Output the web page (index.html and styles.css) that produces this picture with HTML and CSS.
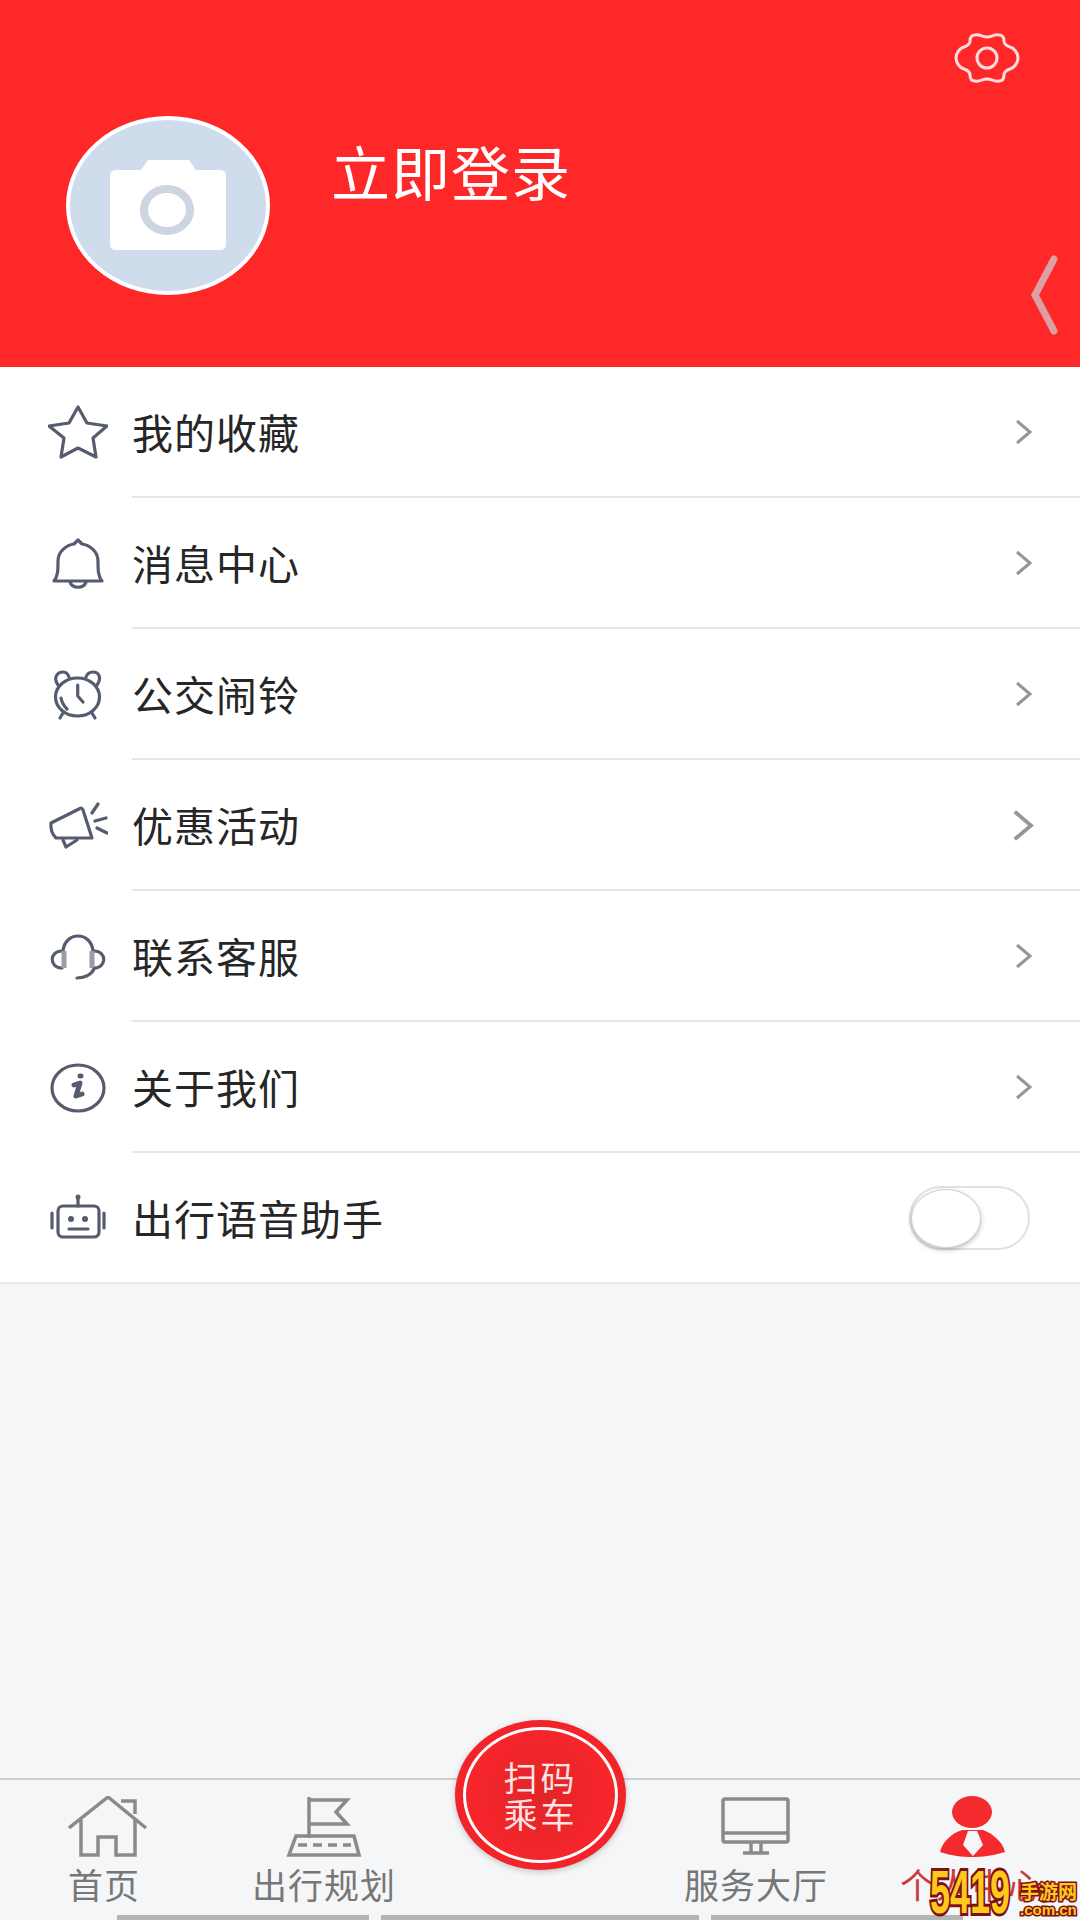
FILE: index.html
```html
<!DOCTYPE html>
<html lang="zh-CN">
<head>
    <meta charset="UTF-8">
    <meta name="viewport" content="width=device-width, initial-scale=1.0">
    <title>个人中心</title>
    <link rel="stylesheet" href="styles.css">
</head>
<body>
    <header class="profile">
        <div class="avatar">
            <svg class="camera" viewBox="0 0 116 90">
                <path d="M0 16 Q0 10 6 10 H31 L38 0 H79 L86 10 H110 Q116 10 116 16 V84 Q116 90 110 90 H6 Q0 90 0 84 Z" fill="#fff"/>
                <ellipse cx="57" cy="50" rx="23" ry="21" fill="#fff" stroke="#cdd5e2" stroke-width="8"/>
            </svg>
        </div>
        <span class="login-text">立即登录</span>
        <svg class="gear" viewBox="0 0 62 50">
            <path d="M31 4 C36 4 38 1 43 2 C47 2 48 5 48 8 C48 11 51 13 54 14 C58 15 62 20 62 25 C62 30 58 35 54 36 C51 37 48 39 48 42 C48 45 47 48 43 48 C38 49 36 46 31 46 C26 46 24 49 19 48 C15 48 14 45 14 42 C14 39 11 37 8 36 C4 35 0 30 0 25 C0 20 4 15 8 14 C11 13 14 11 14 8 C14 5 15 2 19 2 C24 1 26 4 31 4 Z" fill="none" stroke="#ffdcdc" stroke-width="3"/>
            <circle cx="31" cy="25" r="10" fill="none" stroke="#ffdcdc" stroke-width="3"/>
        </svg>
        <svg class="side-arrow" viewBox="0 0 28 80">
            <path d="M24 4 L5 40 L24 76" fill="none" stroke="#dca0a4" stroke-width="7" stroke-linecap="round"/>
        </svg>
    </header>

    <ul class="menu">
        <li class="menu-row">
            <svg class="menu-icon" viewBox="0 0 60 60">
                <path d="M30 4 L39 20 L59 23 L45 35 L48 54 L30 45 L13 54 L16 35 L1 23 L21 20 Z"/>
            </svg>
            <div class="menu-body">
                <span class="menu-text">我的收藏</span>
                <svg class="menu-arrow" viewBox="0 0 20 28"><path d="M3 3 L16 14 L3 25"/></svg>
            </div>
        </li>
        <li class="menu-row">
            <svg class="menu-icon" viewBox="0 0 60 60">
                <path d="M6 47 C10 42 10 36 10 27 C10 17 19 11 26 10 L30 6 L34 10 C41 11 50 17 50 27 C50 36 50 42 54 47 Z"/>
                <path d="M22 48 C24 55 36 55 38 48"/>
            </svg>
            <div class="menu-body">
                <span class="menu-text">消息中心</span>
                <svg class="menu-arrow" viewBox="0 0 20 28"><path d="M3 3 L16 14 L3 25"/></svg>
            </div>
        </li>
        <li class="menu-row">
            <svg class="menu-icon" viewBox="0 0 60 60">
                <ellipse cx="29.5" cy="32" rx="22" ry="19"/>
                <path d="M10 20 C5 13 9 7 15 7 C18 7 20 9 21 12"/>
                <path d="M38 12 C39 9 42 7 45 7 C51 7 54 13 49 20"/>
                <path d="M29.7 20 V31 L35 37"/>
                <path d="M13 33 C14 38 16 41 19 44"/>
                <path d="M15 48 L12 53 M44 48 L47 53"/>
            </svg>
            <div class="menu-body">
                <span class="menu-text">公交闹铃</span>
                <svg class="menu-arrow" viewBox="0 0 20 28"><path d="M3 3 L16 14 L3 25"/></svg>
            </div>
        </li>
        <li class="menu-row">
            <svg class="menu-icon" viewBox="0 0 60 60">
                <path d="M3 27 L31 13 Q34 11 35 14 L44 42 H8 Q2 36 3 27 Z"/>
                <path d="M15 44 L18 51 L29 44"/>
                <path d="M44 17 L50 8 M47 25 L58 22 M49 32 L59 37"/>
            </svg>
            <div class="menu-body">
                <span class="menu-text">优惠活动</span>
                <svg class="menu-arrow menu-arrow-big" viewBox="0 0 20 28"><path d="M3 3 L16 14 L3 25"/></svg>
            </div>
        </li>
        <li class="menu-row">
            <svg class="menu-icon" viewBox="0 0 60 60">
                <path d="M15 24 C16 14 23 9 30 9 C37 9 44 14 45 24"/>
                <path d="M14 24 C1 24 1 41 14 41"/>
                <path d="M46 24 C59 24 59 41 46 41"/>
                <path class="ear-pad" d="M16 24 V41 M44 24 V41"/>
                <path d="M46 42 C43 48 36 51 29 51"/>
            </svg>
            <div class="menu-body">
                <span class="menu-text">联系客服</span>
                <svg class="menu-arrow" viewBox="0 0 20 28"><path d="M3 3 L16 14 L3 25"/></svg>
            </div>
        </li>
        <li class="menu-row">
            <svg class="menu-icon" viewBox="0 0 60 60">
                <ellipse cx="30" cy="30" rx="26" ry="23"/>
                <path class="icon-thick" d="M26 27 L32 25 L28 38 L34 36"/>
                <path class="icon-thick" d="M32 18 L33 18"/>
            </svg>
            <div class="menu-body">
                <span class="menu-text">关于我们</span>
                <svg class="menu-arrow" viewBox="0 0 20 28"><path d="M3 3 L16 14 L3 25"/></svg>
            </div>
        </li>
        <li class="menu-row menu-row-last">
            <svg class="menu-icon" viewBox="0 0 60 60">
                <rect x="10" y="18" width="41" height="31" rx="5"/>
                <path d="M30 18 V11 M4 25 V40 M56 25 V40 M21 41 H40"/>
                <circle class="icon-dot" cx="30" cy="9" r="2.5"/>
                <circle class="icon-dot" cx="23" cy="31" r="3"/>
                <circle class="icon-dot" cx="37" cy="31" r="3"/>
            </svg>
            <div class="menu-body">
                <span class="menu-text">出行语音助手</span>
                <div class="switch"><div class="switch-knob"></div></div>
            </div>
        </li>
    </ul>

    <div class="spacer"></div>

    <nav class="tabbar">
        <div class="tab">
            <svg class="tab-icon" viewBox="0 0 80 62">
                <path d="M1 32 L40 1 L78 32 M53 5 H67 V18 M13 24 V59 H30 V41 H48 V59 H67 V24"/>
            </svg>
            <span class="tab-label tab-label-home">首页</span>
        </div>
        <div class="tab">
            <svg class="tab-icon" viewBox="0 0 80 62">
                <path d="M25 1 V42 M25 4 H63 L52 16 L63 28 H25 M12 40 H70 L75 59 H5 Z"/>
                <path stroke-dasharray="9 6" d="M14 49 H67"/>
            </svg>
            <span class="tab-label">出行规划</span>
        </div>
        <div class="tab"></div>
        <div class="tab">
            <svg class="tab-icon" viewBox="0 0 80 62">
                <rect x="7" y="3" width="65" height="43" rx="2"/>
                <path d="M7 37 H72 M35 46 V57 M45 46 V57 M27 57 H53"/>
            </svg>
            <span class="tab-label">服务大厅</span>
        </div>
        <div class="tab">
            <svg class="tab-icon tab-icon-on" viewBox="0 0 80 62">
                <ellipse cx="40" cy="16" rx="20" ry="16"/>
                <path d="M8 56 C10 46 20 37 30 34 H51 C60 37 71 46 73 56 C60 60 50 61 40 61 C30 61 20 60 8 56 Z"/>
                <path class="tie" d="M36 35 H45 L51 49 L41 60 L31 49 Z"/>
            </svg>
            <span class="tab-label tab-label-on">个人中心</span>
        </div>
    </nav>

    <div class="home-bars">
        <div class="home-bar home-bar-a"></div>
        <div class="home-bar home-bar-b"></div>
        <div class="home-bar home-bar-a"></div>
    </div>

    <div class="scan-btn">
        <div class="scan-ring">
            <span>扫码</span>
            <span>乘车</span>
        </div>
    </div>

    <div class="watermark">
        <span class="wm-num">5419</span>
        <div class="wm-side">
            <span class="wm-name">手游网</span>
            <span class="wm-url">.com.cn</span>
        </div>
    </div>
</body>
</html>
```

FILE: styles.css
```css
* {
    box-sizing: border-box;
}
body {
    font-family: "Noto Sans CJK SC", "Noto Sans", sans-serif;
    background-color: #f5f6f8;
    margin: 0;
    padding: 0;
    width: 1080px;
    height: 1920px;
    overflow: hidden;
    position: relative;
    display: flex;
    flex-direction: column;
}

/* red top part */
.profile {
    background-color: #ff2828;
    height: 367px;
    flex-shrink: 0;
    position: relative;
    display: flex;
    align-items: flex-start;
    padding: 116px 0 0 66px;
}
.avatar {
    width: 204px;
    height: 179px;
    border-radius: 50%;
    border: 4px solid #fff;
    background-color: #cfdcec;
    display: flex;
    justify-content: center;
    padding-top: 40px;
}
.camera {
    width: 116px;
    height: 90px;
}
.login-text {
    color: #fff;
    font-size: 59px;
    line-height: 60px;
    letter-spacing: 1px;
    margin: 25px 0 0 61px;
}
.gear {
    position: absolute;
    left: 956px;
    top: 33px;
    width: 62px;
    height: 50px;
    overflow: visible;
}
.side-arrow {
    position: absolute;
    left: 1030px;
    top: 255px;
    width: 28px;
    height: 80px;
}

/* list */
.menu {
    list-style: none;
    margin: 0;
    padding: 0;
    background-color: #fff;
    flex-shrink: 0;
}
.menu-row {
    height: 131px;
    display: flex;
    align-items: stretch;
    padding-left: 48px;
}
.menu-row-last {
    border-bottom: 2px solid #eaeaea;
}
.menu-icon {
    width: 60px;
    height: 60px;
    align-self: center;
    margin-right: 24px;
    flex-shrink: 0;
}
.menu-icon path,
.menu-icon ellipse,
.menu-icon rect {
    fill: none;
    stroke: #565c70;
    stroke-width: 3.2;
    stroke-linecap: round;
    stroke-linejoin: round;
}
.menu-icon .icon-thick {
    stroke-width: 5;
}
.menu-icon .ear-pad {
    stroke: #9a9ca6;
    stroke-width: 5;
    stroke-linecap: butt;
}
.menu-icon .icon-dot {
    fill: #565c70;
}
.menu-body {
    flex: 1;
    display: flex;
    align-items: center;
    justify-content: space-between;
    border-bottom: 2px solid #e6e6e6;
    padding-right: 46px;
}
.menu-row-last .menu-body {
    border-bottom: none;
    padding-right: 50px;
}
.menu-text {
    font-size: 41px;
    letter-spacing: 1px;
    color: #262626;
    margin-bottom: 2px;
}
.menu-arrow {
    width: 20px;
    height: 28px;
    margin-top: 1px;
}
.menu-arrow-big {
    width: 25px;
    height: 35px;
    margin-right: -2px;
}
.menu-arrow path {
    fill: none;
    stroke: #969696;
    stroke-width: 3;
}
.switch {
    width: 121px;
    height: 64px;
    border-radius: 32px;
    border: 2px solid #e2e2e2;
    background-color: #fff;
    padding-top: 1px;
}
.switch-knob {
    width: 70px;
    height: 59px;
    border-radius: 50%;
    background-color: #fff;
    border: 1px solid #cfcfcf;
    box-shadow: 0 2px 5px rgba(0, 0, 0, 0.25);
}

.spacer {
    flex: 1;
}

/* bottom bar */
.tabbar {
    height: 137px;
    flex-shrink: 0;
    border-top: 2px solid #cfcfcf;
    display: grid;
    grid-template-columns: repeat(5, 216px);
    padding-top: 16px;
}
.tab {
    display: flex;
    flex-direction: column;
    align-items: center;
}
.tab-icon {
    width: 80px;
    height: 62px;
}
.tab-icon path,
.tab-icon rect {
    fill: none;
    stroke: #8a8a8a;
    stroke-width: 3.5;
}
.tab-icon-on ellipse,
.tab-icon-on path {
    fill: #f52a2e;
    stroke: none;
}
.tab-icon-on .tie {
    fill: #f5f6f8;
}
.tab-label {
    font-size: 35px;
    line-height: 44px;
    letter-spacing: 1px;
    color: #777;
    margin-top: 4px;
}
.tab-label-home {
    margin-right: 8px;
}
.tab-label-on {
    color: #c93a3f;
}
.home-bars {
    height: 5px;
    flex-shrink: 0;
    display: flex;
    gap: 12px;
    padding-left: 117px;
}
.home-bar {
    background-color: #b5b5b5;
}
.home-bar-a {
    width: 252px;
}
.home-bar-b {
    width: 318px;
}

/* round button over the bar */
.scan-btn {
    position: absolute;
    left: 455px;
    top: 1720px;
    width: 171px;
    height: 150px;
    border-radius: 50%;
    background-color: #f2242a;
    box-shadow: 0 2px 6px rgba(0, 0, 0, 0.2);
    padding: 7px 8px;
}
.scan-ring {
    width: 100%;
    height: 100%;
    border-radius: 50%;
    border: 3px solid #fff;
    background: radial-gradient(circle, #e02528 0%, #f7262b 70%);
    display: flex;
    flex-direction: column;
    align-items: center;
    justify-content: center;
    color: #ffe2e2;
    font-size: 34px;
    line-height: 37px;
    letter-spacing: 3px;
}

/* site stamp in the corner */
.watermark {
    position: absolute;
    left: 930px;
    top: 1864px;
    width: 150px;
    height: 56px;
    display: flex;
}
.wm-num {
    font-family: "Liberation Sans", sans-serif;
    font-weight: bold;
    font-size: 62px;
    line-height: 56px;
    color: #ffc81e;
    -webkit-text-stroke: 6px #7d1212;
    paint-order: stroke fill;
    transform: scaleX(0.58);
    transform-origin: left center;
    width: 90px;
}
.wm-side {
    display: flex;
    flex-direction: column;
    align-items: flex-start;
    padding-top: 16px;
}
.wm-name {
    font-size: 19px;
    line-height: 22px;
    font-weight: bold;
    color: #ffc81e;
    -webkit-text-stroke: 3px #7d1212;
    paint-order: stroke fill;
}
.wm-url {
    font-family: "Liberation Sans", sans-serif;
    font-size: 15px;
    line-height: 16px;
    font-weight: bold;
    color: #ffc81e;
    -webkit-text-stroke: 3px #7d1212;
    paint-order: stroke fill;
}
```
